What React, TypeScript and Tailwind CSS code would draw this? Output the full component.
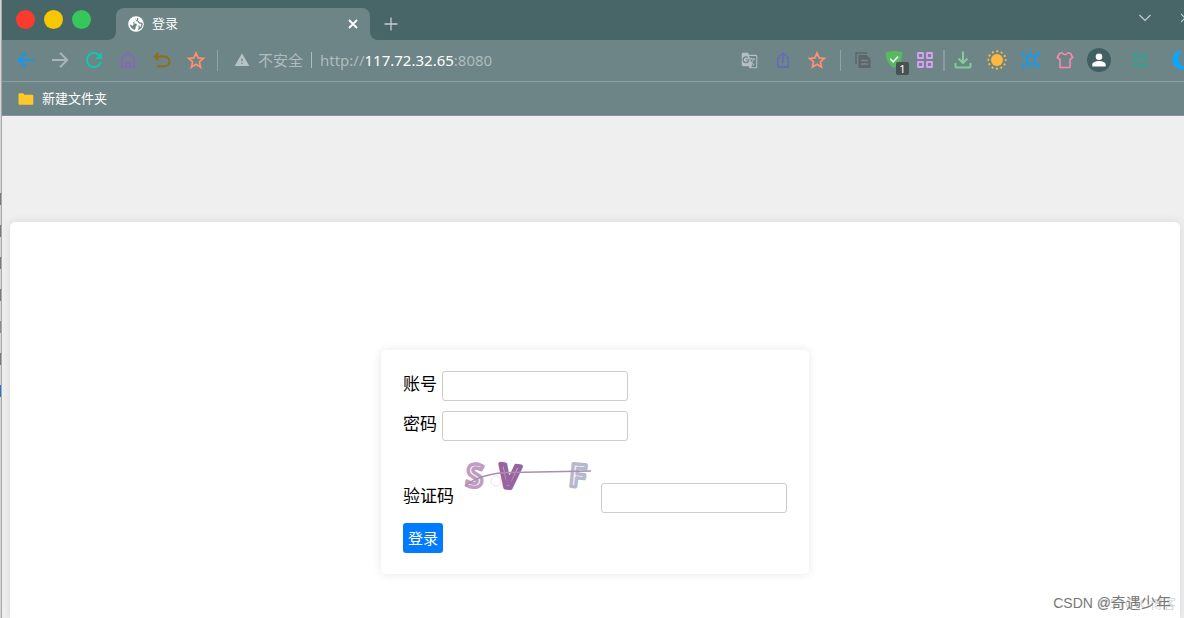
import type { ReactNode } from 'react';
import { MdGTranslate, MdRefresh, MdWarning } from 'react-icons/md';

type IconProps = { className?: string; children: ReactNode };

// 20x20 画布的线条图标
const Icon = ({ className = '', children }: IconProps) => (
  <svg
    viewBox="0 0 20 20"
    className={`size-5 shrink-0 ${className}`}
    fill="none"
    stroke="currentColor"
    strokeWidth="2"
    aria-hidden="true"
  >
    {children}
  </svg>
);

const ToolButton = ({ label, className = 'w-[34px]', children }: IconProps & { label: string }) => (
  <button type="button" aria-label={label} className={`flex h-10 shrink-0 items-center justify-center ${className}`}>
    {children}
  </button>
);

const StarIcon = () => (
  <Icon className="text-[#ff9070]">
    <path d="M10 3l2.100 4.900 5.300.5-4 3.500 1.200 5.200L10 14.300l-4.600 2.800 1.200-5.200-4-3.500 5.300-.5z" strokeWidth="1.700" />
  </Icon>
);

const GlobeIcon = () => (
  <svg viewBox="0 0 16 16" className="size-4 shrink-0" aria-hidden="true">
    <circle cx="8" cy="8" r="7.800" fill="white" />
    <path
      d="M8.300 1.700C6.500 3 7.800 4.300 6.800 5.300 5.800 6.200 4.800 5.800 5 7.300c1.500.5 3.300-.3 3.800 1.200.4 1.200-1.300 1.600-1.200 2.800.1 1.300-.4 2.200-1.300 2.600C3.500 12.700 1.900 10.600 1.900 8c.9 1.300 2.300 1.300 3 1.900"
      fill="#6d8586"
    />
    <path
      d="M9.500 2c.4 1 .3 1.700-.6 2.500 1 .6 1.600 1.300 2.300 2.200.9.900 1.700.2 2.800.6.200 2.500-.8 4.500-2.900 5.700.6-1.500.2-2.600-.4-3.500"
      fill="none"
      stroke="#6d8586"
      strokeWidth="1.300"
    />
  </svg>
);

// 标签页底部的圆角过渡
const TabFlare = ({ className = '' }: { className?: string }) => (
  <svg viewBox="0 0 8 8" className={`size-2 shrink-0 fill-[#6d8586] ${className}`} aria-hidden="true">
    <path d="M8 0v8H0a8 8 0 0 0 8-8z" />
  </svg>
);

const TabBar = () => (
  <header className="flex h-10 items-end bg-[#486668] text-white">
    <div className="flex h-10 w-[106px] shrink-0 items-center gap-[9px] pb-px pl-[14px]">
      <button type="button" aria-label="关闭窗口" className="size-[19px] rounded-full bg-[#fc3b2d]" />
      <button type="button" aria-label="最小化" className="size-[19px] rounded-full bg-[#f9c700]" />
      <button type="button" aria-label="最大化" className="size-[19px] rounded-full bg-[#35c759]" />
    </div>
    <TabFlare />
    <div className="flex h-8 w-[254px] items-center rounded-t-lg bg-[#6d8586] px-3">
      <GlobeIcon />
      <span className="ml-2 text-[13px]">登录</span>
      <button type="button" aria-label="关闭标签页" className="ml-auto">
        <svg viewBox="0 0 10 10" className="size-[10px]" stroke="currentColor" strokeWidth="1.800" aria-hidden="true">
          <path d="M1 1l8 8M9 1l-8 8" />
        </svg>
      </button>
    </div>
    <TabFlare className="-scale-x-100" />
    <button type="button" aria-label="新建标签页" className="ml-[6px] flex h-8 items-center text-[#c2cdce]">
      <svg viewBox="0 0 14 14" className="size-[14px]" stroke="currentColor" strokeWidth="1.300" aria-hidden="true">
        <path d="M7 .5v13M.5 7h13" />
      </svg>
    </button>
    <div className="ml-auto flex h-10 items-center gap-[30px] overflow-hidden pb-1 text-[#c2cdce]">
      <button type="button" aria-label="标签页列表">
        <svg viewBox="0 0 12 8" className="h-2 w-3" fill="none" stroke="currentColor" strokeWidth="1.200" aria-hidden="true">
          <path d="M.5 1L6 6.500 11.500 1" />
        </svg>
      </button>
      <svg viewBox="0 0 3 10" className="h-[10px] w-[3px]" fill="none" stroke="currentColor" strokeWidth="1.200" aria-hidden="true">
        <path d="M0 1l4 4-4 4" />
      </svg>
    </div>
  </header>
);

const Toolbar = () => (
  <div className="flex h-[42px] items-center border-b border-[#8da0a1] bg-[#6d8586] pb-px pl-[7px]">
    <ToolButton label="后退">
      <Icon className="text-[#0b9bf5]">
        <path d="M18 10H3M10 2.800L2.800 10l7.200 7.200" />
      </Icon>
    </ToolButton>
    <ToolButton label="前进">
      <Icon className="text-[#a9b6b7]">
        <path d="M2 10h15M10 2.800l7.200 7.200-7.200 7.200" />
      </Icon>
    </ToolButton>
    <ToolButton label="刷新">
      <MdRefresh className="size-6 text-[#10c9ad]" />
    </ToolButton>
    <ToolButton label="主页">
      <Icon className="text-[#8b63bf]">
        <path d="M3.800 7.800L10 3l6.200 4.800V17H3.800zM8 17v-4.500h4V17" strokeWidth="1.700" />
      </Icon>
    </ToolButton>
    <ToolButton label="恢复标签页">
      <Icon className="text-[#946b12]">
        <path d="M3 6.500h9.500a4.900 4.900 0 0 1 0 9.800H5M6.500 2.800L2.800 6.500l3.700 3.500" strokeWidth="1.900" />
      </Icon>
    </ToolButton>
    <ToolButton label="收藏">
      <StarIcon />
    </ToolButton>
    <span className="ml-[4px] h-[21px] w-px bg-[#92a3a4]" />
    <MdWarning className="ml-4 size-4 text-[#b6c2c3]" />
    <p className="ml-2 flex items-center text-[15px] whitespace-nowrap text-[#b0bcbd]">
      <span>不安全</span>
      <span className="mx-2 h-4 w-px bg-[#b0bcbd]" />
      <span>
        http://<span className="text-white">117.72.32.65</span>:8080
      </span>
    </p>

    <div className="ml-auto flex items-center">
      <ToolButton label="翻译">
        <MdGTranslate className="size-[17px] text-[#b3bfc0]" />
      </ToolButton>
      <ToolButton label="分享">
        <Icon className="text-[#6866bd]">
          <path d="M7 7.500H4.800V17h10.400V7.500H13M10 13V3.500M7 6l3-3 3 3" strokeWidth="1.400" />
        </Icon>
      </ToolButton>
      <ToolButton label="加入书签">
        <StarIcon />
      </ToolButton>
      <span className="mx-[6px] h-[21px] w-px bg-[#92a3a4]" />
      <ToolButton label="复制" className="w-[31px]">
        <Icon className="text-[#5c6768]">
          <path d="M3 14V3h11" strokeWidth="1.500" />
          <path d="M5.500 5h8l4 4v9h-12z" fill="currentColor" stroke="none" />
          <path d="M8 10.500h7M8 14h7" stroke="#748989" strokeWidth="1.300" />
        </Icon>
      </ToolButton>
      <ToolButton label="防护" className="relative w-[31px]">
        <Icon>
          <path d="M10 1c3 0 6 .7 8.500 1.300 0 7-2.300 12-8.500 15.700C3.800 14.300 1.500 9.300 1.500 2.300 4 1.700 7 1 10 1z" fill="#57b860" stroke="none" />
          <path d="M6.200 8.800l3 3 5-5.300" stroke="white" strokeWidth="1.500" />
        </Icon>
        <span className="absolute right-0 bottom-[5px] h-[13px] w-[13px] rounded-xs bg-[#4a5152] text-center text-[11px] leading-[13px] text-white">1</span>
      </ToolButton>
      <ToolButton label="扩展" className="w-[31px]">
        <Icon className="text-[#dba0f5]">
          <path d="M3 3h5v5H3zM12 3h5v5h-5zM3 12h5v5H3zM12 12h5v5h-5z" strokeWidth="1.800" strokeLinejoin="round" />
        </Icon>
      </ToolButton>
      <span className="mr-px ml-[3px] h-[21px] w-[2px] bg-[#899c9d]" />
      <ToolButton label="下载">
        <Icon className="text-[#80cf98]">
          <path d="M10 1.500v11M5.500 8.500l4.500 4.500 4.500-4.500M2.500 13v3.200q0 1.300 1.300 1.300h12.400q1.300 0 1.300-1.300V13" />
        </Icon>
      </ToolButton>
      <ToolButton label="亮度">
        <Icon className="text-[#ffb93f]">
          <circle cx="10" cy="10" r="6" fill="currentColor" stroke="none" />
          <circle cx="10" cy="10" r="8.700" strokeWidth="2.200" strokeLinecap="round" strokeDasharray="0.010 4.545" />
        </Icon>
      </ToolButton>
      <ToolButton label="截图">
        <Icon className="text-[#129cf0]">
          <path d="M6 6h8v8H6z" strokeLinejoin="round" />
          <path d="M2 7V4.500Q2 2.500 4 2.500h2M9 2.500h2M14 2.500h2q2 0 2 2V7M18 13v2.500q0 2-2 2h-2M11 17.500H9M6 17.500H4q-2 0-2-2V13" strokeWidth="1.700" />
        </Icon>
      </ToolButton>
      <ToolButton label="皮肤">
        <Icon className="text-[#f78aac]">
          <path d="M7 2.800q3 3.700 6 0l2.500.7 2.200 4L15 9.500v8H5v-8L2.300 7.500l2.200-4z" strokeWidth="1.600" strokeLinejoin="round" />
        </Icon>
      </ToolButton>
      <ToolButton label="用户">
        <span className="flex size-6 items-center justify-center rounded-full bg-[#426063]">
          <svg viewBox="0 0 14 14" className="size-[14px] fill-white" aria-hidden="true">
            <circle cx="7" cy="3.800" r="3.300" />
            <path d="M.3 13.500v-2C.3 9.300 4 8 7 8s6.700 1.300 6.700 3.500v2z" />
          </svg>
        </span>
      </ToolButton>
      <ToolButton label="菜单" className="w-12">
        <Icon className="text-[#2fa493]">
          <path d="M2 4.500h16M2 10h16M2 15.500h16" strokeWidth="1.800" />
        </Icon>
      </ToolButton>
      <ToolButton label="夜间模式" className="w-5 overflow-hidden pl-2">
        <svg viewBox="0 0 12 20" className="h-5 w-3 fill-[#10a4fa]" aria-hidden="true">
          <path d="M10 .6A9.400 9.400 0 1 0 16 17C8 17.500 3.500 9 10 .6z" />
        </svg>
      </ToolButton>
    </div>
  </div>
);

const BookmarkBar = () => (
  <nav className="flex h-[34px] items-center border-b border-[#839596] bg-[#6d8586] pl-4 text-[13px] text-white">
    <a href="#folder" className="flex items-center gap-2">
      <svg viewBox="0 0 16 12" className="h-3 w-4" aria-hidden="true">
        <path d="M.5 1.500Q.5.300 1.700.300h3.500l1.300 1.400H14q1.300 0 1.300 1.300v7.500q0 1.300-1.300 1.300H1.700Q.5 11.800.5 10.500z" fill="#ffca28" />
      </svg>
      新建文件夹
    </a>
  </nav>
);

const Captcha = () => (
  <svg
    viewBox="0 0 137 51"
    className="mb-[11px] h-[51px] w-[137px]"
    role="img"
    aria-label="验证码图片"
    fontFamily="Open Sans, sans-serif"
    fontWeight="700"
    fontSize="32"
    strokeLinejoin="round"
  >
    <circle cx="37" cy="30" r="5" fill="none" stroke="#e9e4ef" />
    <g fill="#f6f2f8" strokeWidth="3.300">
      <text x="7" y="36" stroke="#bf9dc0" transform="rotate(5 16 25)">S</text>
      <text x="40" y="37" stroke="#98649f" strokeWidth="4" transform="rotate(7 51 25)">V</text>
      <text x="110" y="36" stroke="#b6b8ce" transform="rotate(6 120 25)">F</text>
    </g>
    <path d="M6 35Q22 22 52 21.500T132 20" fill="none" stroke="#a98eb2" strokeWidth="1.500" />
  </svg>
);

type FieldProps = { id: string; label: string; type?: string; children?: ReactNode };

const Field = ({ id, label, type = 'text', children }: FieldProps) => (
  <div className="flex items-end gap-[5px]">
    <label htmlFor={id} className="h-[30px] text-[17px] leading-[26px]">
      {label}
    </label>
    {children}
    <input id={id} type={type} className="h-[30px] w-[186px] rounded-[3px] border border-[#ccc] bg-white px-[5px] text-[15px]" />
  </div>
);

const LoginForm = () => (
  <form
    className="flex flex-col items-start gap-[10px] rounded-[5px] bg-white px-[22px] py-[21px] shadow-[0_0_10px_rgba(0,0,0,0.1)]"
    onSubmit={(e) => e.preventDefault()}
  >
    <Field id="account" label="账号" />
    <Field id="password" label="密码" type="password" />
    <Field id="code" label="验证码">
      <Captcha />
    </Field>
    <button type="submit" className="h-[30px] rounded-[3px] bg-[#007bff] px-[5px] text-[15px] text-white">
      登录
    </button>
  </form>
);

// 窗口左侧露出的背景内容
const BackgroundEdge = () => (
  <div className="flex w-[2px] shrink-0 flex-col gap-[20px] border-r border-[#a5a7a8] bg-[#d4d6d8] pt-[193px]">
    <span className="h-3 bg-[#777a80]" />
    <span className="h-3 bg-[#777a80]" />
    <span className="h-3 bg-[#777a80]" />
    <span className="h-3 bg-[#777a80]" />
    <span className="h-3 bg-[#8c8f92]" />
    <span className="h-3 bg-[#777a80]" />
    <span className="h-3 bg-[#2f75c8]" />
  </div>
);

export default function App() {
  return (
    <div className="relative flex min-h-screen overflow-hidden font-['Noto_Sans','Noto_Sans_CJK_SC',sans-serif] text-black">
      <BackgroundEdge />
      <div className="flex min-w-0 flex-1 flex-col">
        <TabBar />
        <Toolbar />
        <BookmarkBar />
        <main className="flex flex-1 flex-col bg-[#efefef] pt-[106px] pr-1 pl-2">
          <section className="flex flex-1 items-start justify-center rounded-t-[5px] bg-white pt-32 pb-10 shadow-[0_0_10px_rgba(0,0,0,0.1)]">
            <LoginForm />
          </section>
        </main>
      </div>
      <span className="absolute right-2 bottom-[5px] text-[13px] text-[#d5d5d5]">@51CTO博客</span>
      <span className="absolute right-[13px] bottom-1 font-['Liberation_Sans','Noto_Sans_CJK_SC',sans-serif] text-[15px] text-[#777]">
        <span className="text-sm">CSDN @</span>奇遇少年
      </span>
    </div>
  );
}
